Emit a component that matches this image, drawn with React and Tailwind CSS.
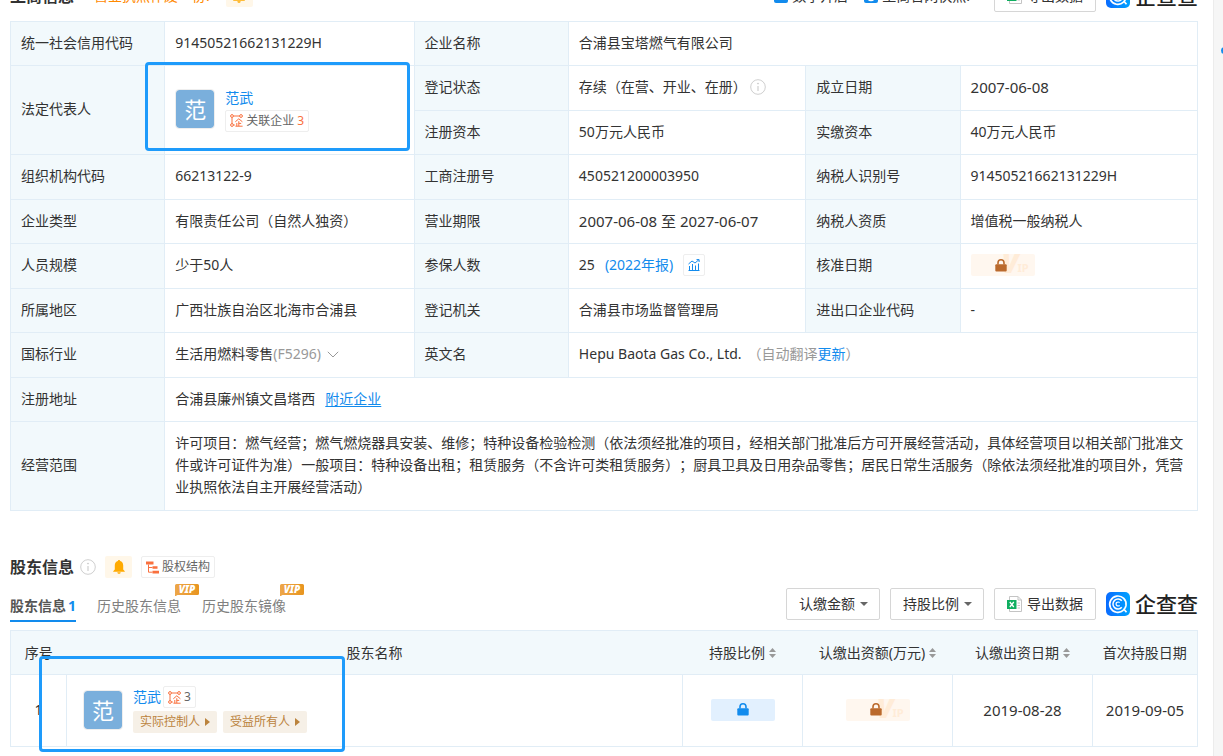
import React from 'react';
import clsx from 'clsx';

const SCOPE =
  '许可项目：燃气经营；燃气燃烧器具安装、维修；特种设备检验检测（依法须经批准的项目，经相关部门批准后方可开展经营活动，具体经营项目以相关部门批准文件或许可证件为准）一般项目：特种设备出租；租赁服务（不含许可类租赁服务）；厨具卫具及日用杂品零售；居民日常生活服务（除依法须经批准的项目外，凭营业执照依法自主开展经营活动）';

function InfoIcon() {
  return (
    <svg className="h-4 w-4 shrink-0" viewBox="0 0 16 16" fill="none" stroke="#cfcfcf">
      <circle cx="8" cy="8" r="7.3" />
      <path d="M8 7v5" strokeWidth="1.2" />
      <circle cx="8" cy="4.6" r="0.5" fill="#cfcfcf" />
    </svg>
  );
}

function RelationIcon() {
  return (
    <svg className="h-[13px] w-[13px] shrink-0" viewBox="0 0 13 13" fill="none" stroke="#f9703e">
      <circle cx="2" cy="2" r="1.4" />
      <circle cx="11" cy="2" r="1.4" />
      <circle cx="2" cy="11" r="1.4" />
      <path d="M3.4 2h6.2M2 3.4v6.2M3.4 11h1.4" />
      <path d="M5.3 7.8 8.8 4.8l3.6 3M8.8 7.2v4.9M8.8 9.4h2.4M6.8 9v3.1M5.4 12.2h7.2" />
    </svg>
  );
}

function StructureIcon() {
  return (
    <svg className="h-[13px] w-[13px] shrink-0" viewBox="0 0 13 13" fill="#f9703e">
      <path d="M0 0.5h7.5v3H0z" />
      <path d="M6.5 5.2h5v2.6h-5zM6.5 9.8H13v2.7H6.5z" />
      <path d="M2.5 3.5v7.7h4M2.5 6.5h4" fill="none" stroke="#f9703e" />
    </svg>
  );
}

function BellButton() {
  return (
    <button
      type="button"
      aria-label="监控"
      className="flex h-[22px] w-[27px] shrink-0 items-center justify-center rounded-xs bg-[#fff7e9]"
    >
      <svg className="h-[14px] w-3" viewBox="0 0 12 14" fill="#ffaa00">
        <path d="M6 0c.7 0 1.1.5 1.1 1.1C9 1.6 10.2 3.2 10.2 5.2V9.5L11.8 11.2V11.7H.2v-.5L1.8 9.5V5.2C1.8 3.2 3 1.6 4.9 1.1 4.9.5 5.3 0 6 0z" />
        <path d="M4.3 12.3h3.4C7.5 13.3 6.9 13.8 6 13.8s-1.5-.5-1.7-1.5z" />
      </svg>
    </button>
  );
}

function LockIcon() {
  return (
    <svg className="relative h-[13px] w-3" viewBox="0 0 12 13" fill="currentColor">
      <rect x="0.3" y="5.2" width="11.4" height="7.4" rx="1" />
      <path d="M3 5.6V3.8a3 3 0 0 1 6 0v1.8" fill="none" stroke="currentColor" strokeWidth="1.6" />
    </svg>
  );
}

function LockPill({ vip }) {
  return (
    <button
      type="button"
      aria-label="查看"
      className={clsx(
        'relative flex h-[22px] w-16 items-center overflow-hidden rounded-xs',
        vip ? 'justify-start bg-[#fff7ef] pl-6 text-[#bb6a2d]' : 'justify-center bg-[#e2f0fe] text-[#128bed]'
      )}
    >
      {vip && (
        <>
          <span className="absolute -top-[5px] left-[31px] text-[28px] leading-[26px] font-black text-[#ffecd8] italic">V</span>
          <span className="absolute top-2 left-[47px] text-[11px] leading-[12px] font-bold text-[#ffecd8]">IP</span>
        </>
      )}
      <LockIcon />
    </button>
  );
}

function VipBadge() {
  return (
    <span className="absolute -top-1 right-[-18px] flex h-3 w-6">
      <svg className="absolute inset-0 h-3 w-6" viewBox="0 0 24 12">
        <defs>
          <linearGradient id="vip" x1="0" x2="1">
            <stop offset="0" stopColor="#eda64a" />
            <stop offset="1" stopColor="#e8951f" />
          </linearGradient>
        </defs>
        <path d="M1.5 0h21A1.5 1.5 0 0 1 24 1.5V9.5A1.5 1.5 0 0 1 22.5 11H2.5L0 12.5V1.5A1.5 1.5 0 0 1 1.5 0z" fill="url(#vip)" />
      </svg>
      <span className="relative w-full text-center text-[10px] leading-[11px] font-black text-white italic">VIP</span>
    </span>
  );
}

function Avatar() {
  return (
    <span className="flex h-10 w-10 shrink-0 items-center justify-center rounded-sm border border-[#eee] bg-[#7aafdc] bg-clip-padding text-[22px] leading-none text-white">
      范
    </span>
  );
}

function Tag({ children }) {
  return (
    <a
      href="#"
      className="inline-flex h-[22px] shrink-0 items-center gap-[3px] rounded-xs border border-[#eee] bg-white px-1 text-xs text-[#666]"
    >
      {children}
    </a>
  );
}

function RoleTag({ children }) {
  return (
    <a href="#" className="inline-flex h-[22px] items-center gap-[5px] rounded-xs bg-[#f6f0e7] px-[7px] text-xs text-[#bb833d]">
      {children}
      <svg className="h-2 w-[5px]" viewBox="0 0 5 8" fill="currentColor">
        <path d="M0 0l5 4-5 4z" />
      </svg>
    </a>
  );
}

function FilterSelect({ label }) {
  return (
    <span className="relative flex">
      <select
        aria-label={label}
        className="h-8 w-[94px] appearance-none rounded-xs border border-[#d6d6d6] bg-white pl-3 text-sm text-[#333]"
      >
        <option>{label}</option>
      </select>
      <svg className="pointer-events-none absolute top-[14px] right-[12px] h-1 w-2" viewBox="0 0 8 4" fill="#666">
        <path d="M0 0h8L4 4z" />
      </svg>
    </span>
  );
}

function ExportButton() {
  return (
    <button
      type="button"
      className="flex h-8 w-[102px] items-center justify-center gap-[5px] rounded-xs border border-[#d6d6d6] bg-white text-[#333]"
    >
      <svg className="h-4 w-[15px]" viewBox="0 0 15 16">
        <path d="M2.5.5h8.5l3.5 3.5v11.5h-12z" fill="#fff" stroke="#c4c4c4" />
        <path d="M11 .5V4h3.5M10.5 7h2.5M10.5 9.5h2.5M10.5 12h2.5" fill="none" stroke="#c4c4c4" />
        <path d="M0 4h9.5v9H0z" fill="#0fae60" />
        <path d="M2.8 6l4 5M6.8 6l-4 5" stroke="#fff" strokeWidth="1.3" />
      </svg>
      导出数据
    </button>
  );
}

function Logo() {
  return (
    <a href="#" className="flex items-center gap-[5px] text-[21px] leading-6 font-medium text-[#222]">
      <svg className="h-6 w-6" viewBox="0 0 24 24" fill="none" stroke="#fff">
        <defs>
          <linearGradient id="logo" x1="0" x2="1">
            <stop offset="0" stopColor="#0a6cff" />
            <stop offset="1" stopColor="#00a2ff" />
          </linearGradient>
        </defs>
        <rect width="24" height="24" rx="5" fill="url(#logo)" stroke="none" />
        <path d="M17.5 18.2A8.2 8.2 0 1 1 20 13.5c-.3 1.6-1 2.9-2 3.9l2.5 2.8" strokeWidth="1.7" />
        <path d="M15.8 8.8a5 5 0 1 0 0 6.4" strokeWidth="1.5" />
        <path d="M13.6 10.7a2 2 0 1 0 0 2.6" strokeWidth="1.2" />
      </svg>
      企查查
    </a>
  );
}

function SortIcon() {
  return (
    <svg className="h-[10px] w-[7px]" viewBox="0 0 7 10" fill="#999">
      <path d="M0 4l3.5-4L7 4zM0 6h7l-3.5 4z" />
    </svg>
  );
}

function SortHead({ children }) {
  return (
    <button type="button" className="inline-flex items-center gap-1">
      {children}
      <SortIcon />
    </button>
  );
}

function Label({ children, ...rest }) {
  return (
    <th scope="row" className="border border-[#e1edf6] bg-[#f2f9fc] px-[10px] pb-[2px] text-left font-normal" {...rest}>
      {children}
    </th>
  );
}

function Value({ children, className, ...rest }) {
  return (
    <td className={clsx('border border-[#e1edf6] px-[10px] pb-[2px]', className)} {...rest}>
      {children}
    </td>
  );
}

function CompanyTable() {
  return (
    <table className="w-full table-fixed border-collapse">
      <colgroup>
        <col className="w-[13%]" />
        <col className="w-[21%]" />
        <col className="w-[13%]" />
        <col className="w-[20%]" />
        <col className="w-[13%]" />
        <col className="w-[20%]" />
      </colgroup>
      <tbody className="[&>tr]:even:h-[45px] [&>tr]:odd:h-11">
        <tr>
          <Label>统一社会信用代码</Label>
          <Value>91450521662131229H</Value>
          <Label>企业名称</Label>
          <Value colSpan={3}>合浦县宝塔燃气有限公司</Value>
        </tr>
        <tr>
          <Label rowSpan={2}>法定代表人</Label>
          <Value rowSpan={2} className="relative">
            <div className="flex items-center gap-[10px]">
              <Avatar />
              <div className="flex flex-col items-start gap-px">
                <a href="#" className="text-[#128bed]">范武</a>
                <Tag>
                  <RelationIcon />
                  <span>关联企业</span>
                  <span className="text-[#f9703e]">3</span>
                </Tag>
              </div>
            </div>
            <div className="pointer-events-none absolute -top-1 right-1 bottom-[3px] -left-5 rounded-sm border-3 border-[#1e9bfb]" />
          </Value>
          <Label>登记状态</Label>
          <Value>
            <div className="flex items-center gap-[3px]">
              存续（在营、开业、在册）
              <InfoIcon />
            </div>
          </Value>
          <Label>成立日期</Label>
          <Value className="text-[15px]">2007-06-08</Value>
        </tr>
        <tr>
          <Label>注册资本</Label>
          <Value>50万元人民币</Value>
          <Label>实缴资本</Label>
          <Value>40万元人民币</Value>
        </tr>
        <tr>
          <Label>组织机构代码</Label>
          <Value>66213122-9</Value>
          <Label>工商注册号</Label>
          <Value>450521200003950</Value>
          <Label>纳税人识别号</Label>
          <Value>91450521662131229H</Value>
        </tr>
        <tr>
          <Label>企业类型</Label>
          <Value>有限责任公司（自然人独资）</Value>
          <Label>营业期限</Label>
          <Value className="text-[15px]">2007-06-08 至 2027-06-07</Value>
          <Label>纳税人资质</Label>
          <Value>增值税一般纳税人</Value>
        </tr>
        <tr>
          <Label>人员规模</Label>
          <Value>少于50人</Value>
          <Label>参保人数</Label>
          <Value>
            <div className="flex items-center gap-[10px]">
              25
              <a href="#" className="text-[#128bed]">(2022年报)</a>
              <button
                type="button"
                aria-label="参保人数趋势"
                className="flex h-[22px] w-[22px] items-center justify-center rounded-xs border border-[#eee]"
              >
                <svg className="h-3 w-3" viewBox="0 0 12 12" fill="none" stroke="#128bed">
                  <path d="M.5 11.5h11M1.5 7v4M4.5 5v6M7.5 6.5V11M10.5 4.5V11" />
                  <path d="M.5 5l3.5-3 3 2L10.8.8M8.5.6h2.6V3" />
                </svg>
              </button>
            </div>
          </Value>
          <Label>核准日期</Label>
          <Value>
            <LockPill vip />
          </Value>
        </tr>
        <tr>
          <Label>所属地区</Label>
          <Value>广西壮族自治区北海市合浦县</Value>
          <Label>登记机关</Label>
          <Value>合浦县市场监督管理局</Value>
          <Label>进出口企业代码</Label>
          <Value>-</Value>
        </tr>
        <tr>
          <Label>国标行业</Label>
          <Value>
            <div className="flex items-center">
              生活用燃料零售
              <span className="text-[#999]">(F5296)</span>
              <svg className="ml-[6px] h-[7px] w-3" viewBox="0 0 12 7" fill="none" stroke="#999">
                <path d="M.8.8 6 6l5.2-5.2" />
              </svg>
            </div>
          </Value>
          <Label>英文名</Label>
          <Value colSpan={3}>
            Hepu Baota Gas Co., Ltd.
            <span className="ml-[6px] text-[#999]">
              （自动翻译<a href="#" className="text-[#128bed]">更新</a>）
            </span>
          </Value>
        </tr>
        <tr>
          <Label>注册地址</Label>
          <Value colSpan={5}>
            合浦县廉州镇文昌塔西
            <a href="#" className="ml-[10px] text-[#128bed] underline underline-offset-2">附近企业</a>
          </Value>
        </tr>
        <tr>
          <Label>经营范围</Label>
          <Value colSpan={5}>
            <p className="py-[10px]">{SCOPE}</p>
          </Value>
        </tr>
      </tbody>
    </table>
  );
}

function ShareholderTable() {
  return (
    <div className="relative mt-2">
      <table className="w-full table-fixed border-collapse border border-[#e1edf6] text-center">
        <colgroup>
          <col className="w-14" />
          <col />
          <col className="w-[120px]" />
          <col className="w-[150px]" />
          <col className="w-[140px]" />
          <col className="w-[105px]" />
        </colgroup>
        <thead>
          <tr className="h-11 bg-[#f2f9fc] [&>th]:font-normal">
            <th>序号</th>
            <th>股东名称</th>
            <th><SortHead>持股比例</SortHead></th>
            <th><SortHead>认缴出资额(万元)</SortHead></th>
            <th><SortHead>认缴出资日期</SortHead></th>
            <th>首次持股日期</th>
          </tr>
        </thead>
        <tbody>
          <tr className="h-[72px] [&>td]:border [&>td]:border-[#e1edf6] [&>td]:pb-[2px]">
            <td>1</td>
            <td>
              <div className="flex items-center gap-[10px] pl-4 text-left">
                <Avatar />
                <div className="flex flex-col gap-[3px]">
                  <div className="flex items-center gap-[2px]">
                    <a href="#" className="text-[#128bed]">范武</a>
                    <Tag>
                      <RelationIcon />
                      <span>3</span>
                    </Tag>
                  </div>
                  <div className="flex gap-[6px]">
                    <RoleTag>实际控制人</RoleTag>
                    <RoleTag>受益所有人</RoleTag>
                  </div>
                </div>
              </div>
            </td>
            <td>
              <div className="flex justify-center">
                <LockPill />
              </div>
            </td>
            <td>
              <div className="flex justify-center">
                <LockPill vip />
              </div>
            </td>
            <td className="text-[15px]">2019-08-28</td>
            <td className="text-[15px]">2019-09-05</td>
          </tr>
        </tbody>
      </table>
      <div className="pointer-events-none absolute top-[26px] -bottom-[5px] left-[29px] w-[306px] rounded-sm border-3 border-[#1e9bfb]" />
    </div>
  );
}

export default function App() {
  return (
    <div className="flex min-h-screen overflow-hidden bg-white font-['Noto_Sans','Noto_Sans_CJK_SC',sans-serif] text-sm leading-[22px] text-[#333] [text-spacing-trim:space-all]">
      <main className="min-w-0 flex-1 pr-[15px] pl-[10px]">
        <header className="-mt-5 mb-[9px] flex h-8 items-center">
          <h2 className="text-base font-bold">工商信息</h2>
          <a href="#" className="ml-5 text-[#ff8900]">营业执照作废一份!</a>
          <div className="ml-4">
            <BellButton />
          </div>
          <div className="ml-auto flex items-center">
            <a href="#" className="flex items-center gap-1">
              <span className="h-[14px] w-[14px] rounded-xs bg-[#128bed]" />
              数字开店
            </a>
            <a href="#" className="ml-4 flex items-center gap-1">
              <svg className="h-[14px] w-[14px]" viewBox="0 0 14 14">
                <rect width="14" height="14" rx="2" fill="#128bed" />
                <circle cx="7" cy="8.5" r="3" fill="none" stroke="#fff" strokeWidth="1.5" />
              </svg>
              工商官网快照!
            </a>
            <div className="ml-6 flex items-center gap-[10px]">
              <ExportButton />
              <Logo />
            </div>
          </div>
        </header>

        <CompanyTable />

        <section className="mt-[45px]">
          <div className="flex h-[22px] items-center">
            <h2 className="mr-[6px] text-base font-bold">股东信息</h2>
            <InfoIcon />
            <div className="mx-[9px]">
              <BellButton />
            </div>
            <Tag>
              <StructureIcon />
              <span>股权结构</span>
            </Tag>
          </div>

          <div className="mt-[10px] flex items-start justify-between">
            <nav className="flex h-[34px] gap-[21px] pt-[7px] text-[#808080]">
              <a href="#" className="border-b-2 border-[#128bed] font-bold text-[#555]">
                股东信息<span className="ml-[2px] text-[#128bed]">1</span>
              </a>
              <a href="#" className="relative">
                历史股东信息
                <span className="absolute -top-[7px] right-0"><VipBadge /></span>
              </a>
              <a href="#" className="relative">
                历史股东镜像
                <span className="absolute -top-[7px] right-0"><VipBadge /></span>
              </a>
            </nav>
            <div className="flex items-center gap-[10px]">
              <FilterSelect label="认缴金额" />
              <FilterSelect label="持股比例" />
              <ExportButton />
              <Logo />
            </div>
          </div>

          <ShareholderTable />
        </section>
      </main>

      <aside className="relative w-[10px] shrink-0 border-l border-[#ececec] bg-[#f6f6f6]">
        <span className="absolute top-[47px] left-[7px] h-[7px] w-[7px] rounded-full bg-[#128bed]" />
      </aside>
    </div>
  );
}
